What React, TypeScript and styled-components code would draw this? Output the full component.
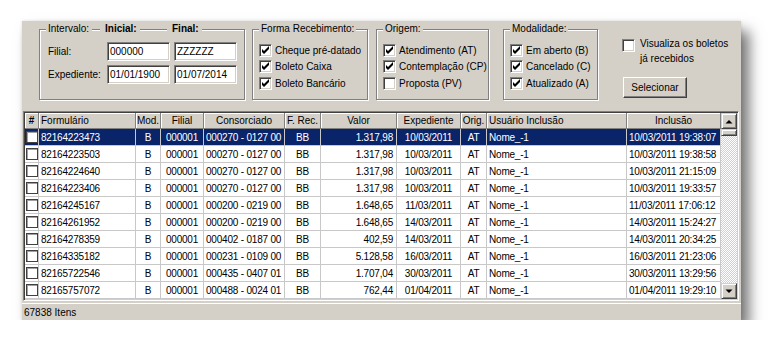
import React from 'react'
import styled, { createGlobalStyle } from 'styled-components'

const GlobalStyle = createGlobalStyle`
    html, body {
        margin: 0;
        padding: 0;
        background: #fff;
    }
    body {
        font-family: "Liberation Sans", Arial, sans-serif;
        font-size: 10px;
        color: #000;
    }
`

const FACE = '#d4d0c8'

const Page = styled.div`
    padding: 21px 0 0 22px;
`

const Window = styled.div`
    box-sizing: border-box;
    width: 719px;
    height: 299px;
    background: ${FACE};
    display: flex;
    flex-direction: column;
    box-shadow: 8px 10px 13px rgba(0, 0, 0, .55), 0 0 3px rgba(0, 0, 0, .12);
`

const FilterBar = styled.div`
    box-sizing: border-box;
    height: 90px;
    display: flex;
    align-items: flex-start;
    padding: 2px 0 0 17px;
`

const GroupBox = styled.fieldset<{ $w: number, $gap: number }>`
    box-sizing: border-box;
    width: ${p => p.$w}px;
    height: 77px;
    margin: 0 ${p => p.$gap}px 0 0;
    padding: 0 6px;
    min-inline-size: 0;
    border: 1px solid #808080;
    box-shadow: inset 1px 1px 0 #fff, 1px 1px 0 #fff;
`

const Legend = styled.legend`
    padding: 0 2px;
    line-height: 12px;
    background: ${FACE};
`

const IntervalLegend = styled.legend`
    padding: 0 3px 0 0;
    line-height: 12px;
    background: ${FACE};
    display: flex;
    align-items: center;
`

const LegendCell = styled.span<{ $w: number }>`
    display: flex;
    align-items: center;
    width: ${p => p.$w}px;
`

const LegendText = styled.span<{ $bold?: boolean }>`
    padding-left: 2px;
    font-weight: ${p => p.$bold ? 'bold' : 'normal'};
`

const Rule = styled.span`
    flex: 1;
    height: 0;
    margin: 1px 3px 0 3px;
    border-top: 1px solid #808080;
    border-bottom: 1px solid #fff;
`

const IntervalGrid = styled.div`
    display: grid;
    grid-template-columns: 55px 63px 63px;
    column-gap: 4px;
    row-gap: 4px;
    align-items: center;
    padding: 7px 0 0 2px;
`

const TextInput = styled.input`
    box-sizing: border-box;
    width: 63px;
    height: 19px;
    margin: 0;
    padding: 0 2px;
    font: inherit;
    color: #000;
    background: #fff;
    border: 1px solid;
    border-color: #808080 #fff #fff #808080;
    box-shadow: inset 1px 1px 0 #404040, inset -1px -1px 0 ${FACE};
    outline: none;
`

const CheckList = styled.div`
    display: grid;
    grid-auto-rows: 16.5px;
    padding-top: 7px;
`

const CheckRow = styled.label`
    display: flex;
    align-items: center;
    gap: 3px;
    white-space: nowrap;
`

const Box = styled.span`
    box-sizing: border-box;
    flex: none;
    width: 13px;
    height: 13px;
    display: flex;
    align-items: center;
    justify-content: center;
    background: #fff;
    border: 1px solid;
    border-color: #808080 #fff #fff #808080;
    box-shadow: inset 1px 1px 0 #404040, inset -1px -1px 0 ${FACE};
`

const SidePanel = styled.div`
    display: flex;
    flex-direction: column;
    align-items: flex-start;
    padding-top: 13px;
    margin-left: 10px;
`

const ViewRow = styled.label`
    display: flex;
    align-items: flex-start;
    gap: 5px;
    line-height: 15px;
    & > ${Box} {
        margin-top: 3px;
    }
`

const Button = styled.button`
    box-sizing: border-box;
    width: 64px;
    height: 21px;
    margin: 11px 0 0 1px;
    padding: 0;
    font: inherit;
    color: #000;
    background: ${FACE};
    border: 1px solid;
    border-color: #fff #404040 #404040 #fff;
    box-shadow: inset -1px -1px 0 #808080;
`

const TableFrame = styled.div`
    box-sizing: border-box;
    height: 190px;
    margin: 0 2px 0 1px;
    padding: 1px;
    display: flex;
    border: 1px solid;
    border-color: #808080 #fff #fff #808080;
    box-shadow: inset 1px 1px 0 #404040, inset -1px -1px 0 ${FACE};
`

const COLS = '14px 97px 25px 43px 81px 36px 76px 64px 26px 140px 94px'

const GridArea = styled.div`
    flex: 1;
    background: #fff;
    overflow: hidden;
`

const HeaderRow = styled.div`
    display: grid;
    grid-template-columns: ${COLS};
    height: 16px;
    background: ${FACE};
`

type Align = 'left' | 'center' | 'right'
const justify = (a: Align) => a === 'left' ? 'flex-start' : a === 'right' ? 'flex-end' : 'center'

const HeadCell = styled.div<{ $align: Align, $bold?: boolean }>`
    box-sizing: border-box;
    display: flex;
    align-items: center;
    justify-content: ${p => justify(p.$align)};
    padding: 0 2px;
    white-space: nowrap;
    overflow: hidden;
    font-weight: ${p => p.$bold ? 'bold' : 'normal'};
    border-right: 1px solid #808080;
    border-bottom: 1px solid #808080;
    box-shadow: inset 1px 1px 0 #fff;
`

const Row = styled.div<{ $selected?: boolean }>`
    display: grid;
    grid-template-columns: ${COLS};
    height: 17px;
    background: ${p => p.$selected ? '#0a246a' : '#fff'};
    color: ${p => p.$selected ? '#fff' : '#000'};
`

const Cell = styled.div<{ $align: Align }>`
    box-sizing: border-box;
    display: flex;
    align-items: center;
    justify-content: ${p => justify(p.$align)};
    padding: ${p => p.$align === 'right' ? '0 3px 0 0' : p.$align === 'left' ? '0 0 0 2px' : '0'};
    white-space: nowrap;
    overflow: hidden;
    letter-spacing: -0.2px;
    border-right: 1px solid #c8c8c8;
    border-bottom: 1px solid #c8c8c8;
`

const RowBox = styled.span`
    box-sizing: border-box;
    width: 12px;
    height: 12px;
    background: #fff;
    border: 1px solid #404040;
    box-shadow: inset 1px 1px 0 #a0a0a0;
`

const ScrollBar = styled.div`
    width: 16px;
    display: flex;
    flex-direction: column;
    background: repeating-conic-gradient(${FACE} 0 25%, #fff 0 50%) 0 0 / 2px 2px;
`

const Raised = styled.div<{ $h: number }>`
    box-sizing: border-box;
    height: ${p => p.$h}px;
    display: flex;
    align-items: center;
    justify-content: center;
    background: ${FACE};
    border: 1px solid;
    border-color: ${FACE} #404040 #404040 ${FACE};
    box-shadow: inset 1px 1px 0 #fff, inset -1px -1px 0 #808080;
`

const Track = styled.div`
    flex: 1;
`

const StatusBar = styled.div`
    box-sizing: border-box;
    height: 17px;
    margin-top: 2px;
    padding-left: 2px;
    display: flex;
    align-items: center;
    border-top: 1px solid #fff;
`

const Check = () => (
    <svg width="9" height="9" viewBox="0 0 9 9">
        <polygon points="1,3 3,5 8,0 8,3 3,8 1,6" fill="#000" />
    </svg>
)

const CheckBox = ({ checked }: { checked: boolean }) => (
    <Box>{checked && <Check />}</Box>
)

const Arrow = ({ up }: { up: boolean }) => (
    <svg width="8" height="5" viewBox="0 0 8 5">
        <polygon points={up ? '0.5,4.5 4,1 7.5,4.5' : '0.5,0.5 4,4 7.5,0.5'} fill="#000" />
    </svg>
)

const options = [
    { title: 'Forma Recebimento:', w: 116, gap: 8, items: [['Cheque pré-datado', true], ['Boleto Caixa', true], ['Boleto Bancário', true]] },
    { title: 'Origem:', w: 113, gap: 14, items: [['Atendimento (AT)', true], ['Contemplação (CP)', true], ['Proposta (PV)', false]] },
    { title: 'Modalidade:', w: 95, gap: 14, items: [['Em aberto (B)', true], ['Cancelado (C)', true], ['Atualizado (A)', true]] },
] as { title: string, w: number, gap: number, items: [string, boolean][] }[]

const columns: { title: string, head: Align, cell: Align, bold?: boolean }[] = [
    { title: '#', head: 'center', cell: 'center', bold: true },
    { title: 'Formulário', head: 'left', cell: 'left' },
    { title: 'Mod.', head: 'center', cell: 'center' },
    { title: 'Filial', head: 'center', cell: 'center' },
    { title: 'Consorciado', head: 'center', cell: 'left' },
    { title: 'F. Rec.', head: 'center', cell: 'center' },
    { title: 'Valor', head: 'center', cell: 'right' },
    { title: 'Expediente', head: 'center', cell: 'center' },
    { title: 'Orig.', head: 'center', cell: 'center' },
    { title: 'Usuário Inclusão', head: 'left', cell: 'left' },
    { title: 'Inclusão', head: 'center', cell: 'left' },
]

const rows = [
    ['82164223473', '000270 - 0127 00', '1.317,98', '10/03/2011', '10/03/2011 19:38:07'],
    ['82164223503', '000270 - 0127 00', '1.317,98', '10/03/2011', '10/03/2011 19:38:58'],
    ['82164224640', '000270 - 0127 00', '1.317,98', '10/03/2011', '10/03/2011 21:15:09'],
    ['82164223406', '000270 - 0127 00', '1.317,98', '10/03/2011', '10/03/2011 19:33:57'],
    ['82164245167', '000200 - 0219 00', '1.648,65', '11/03/2011', '11/03/2011 17:06:12'],
    ['82164261952', '000200 - 0219 00', '1.648,65', '14/03/2011', '14/03/2011 15:24:27'],
    ['82164278359', '000402 - 0187 00', '402,59', '14/03/2011', '14/03/2011 20:34:25'],
    ['82164335182', '000231 - 0109 00', '5.128,58', '16/03/2011', '16/03/2011 21:23:06'],
    ['82165722546', '000435 - 0407 01', '1.707,04', '30/03/2011', '30/03/2011 13:29:56'],
    ['82165757072', '000488 - 0024 01', '762,44', '01/04/2011', '01/04/2011 19:29:10'],
]

const App = () => {
    return (
        <Page>
            <GlobalStyle />
            <Window>
                <FilterBar>
                    <GroupBox $w={206} $gap={7}>
                        <IntervalLegend>
                            <LegendCell $w={57}><LegendText>Intervalo:</LegendText><Rule /></LegendCell>
                            <LegendCell $w={67}><LegendText $bold>Inicial:</LegendText><Rule /></LegendCell>
                            <LegendText $bold>Final:</LegendText>
                        </IntervalLegend>
                        <IntervalGrid>
                            <span>Filial:</span>
                            <TextInput defaultValue="000000" />
                            <TextInput defaultValue="ZZZZZZ" />
                            <span>Expediente:</span>
                            <TextInput defaultValue="01/01/1900" />
                            <TextInput defaultValue="01/07/2014" />
                        </IntervalGrid>
                    </GroupBox>
                    {options.map(group => (
                        <GroupBox key={group.title} $w={group.w} $gap={group.gap}>
                            <Legend>{group.title}</Legend>
                            <CheckList>
                                {group.items.map(([label, checked]) => (
                                    <CheckRow key={label}>
                                        <CheckBox checked={checked} />
                                        {label}
                                    </CheckRow>
                                ))}
                            </CheckList>
                        </GroupBox>
                    ))}
                    <SidePanel>
                        <ViewRow>
                            <CheckBox checked={false} />
                            <span>Visualiza os boletos<br />já recebidos</span>
                        </ViewRow>
                        <Button>Selecionar</Button>
                    </SidePanel>
                </FilterBar>
                <TableFrame>
                    <GridArea>
                        <HeaderRow>
                            {columns.map(c => (
                                <HeadCell key={c.title} $align={c.head} $bold={c.bold}>{c.title}</HeadCell>
                            ))}
                        </HeaderRow>
                        {rows.map((r, i) => {
                            const values = ['', r[0], 'B', '000001', r[1], 'BB', r[2], r[3], 'AT', 'Nome_-1', r[4]]
                            return (
                                <Row key={r[0]} $selected={i === 0}>
                                    {values.map((v, j) => (
                                        <Cell key={j} $align={columns[j].cell}>
                                            {j === 0 ? <RowBox /> : v}
                                        </Cell>
                                    ))}
                                </Row>
                            )
                        })}
                    </GridArea>
                    <ScrollBar>
                        <Raised $h={16}><Arrow up /></Raised>
                        <Raised $h={7} />
                        <Track />
                        <Raised $h={16}><Arrow up={false} /></Raised>
                    </ScrollBar>
                </TableFrame>
                <StatusBar>67838 Itens</StatusBar>
            </Window>
        </Page>
    )
}

export default App
